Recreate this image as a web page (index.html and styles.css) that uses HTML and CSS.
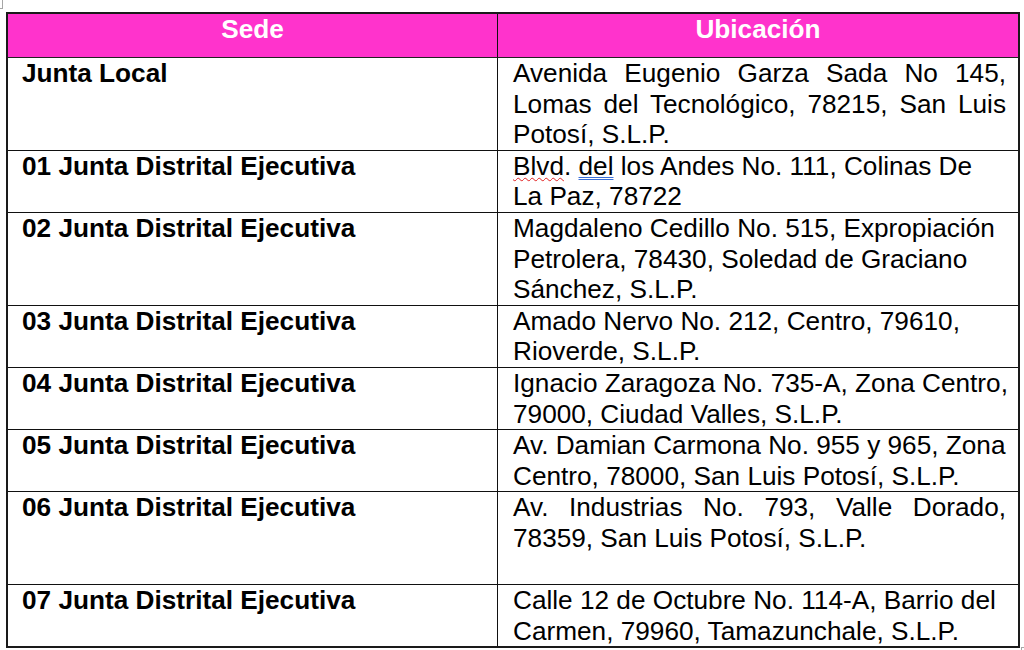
FILE: index.html
```html
<!DOCTYPE html>
<html lang="es">
<head>
<meta charset="utf-8">
<title>Sedes</title>
<link rel="stylesheet" href="styles.css">
</head>
<body>
<div class="mark mark-tl"></div>
<div class="mark mark-br"></div>
<div class="sedes">
  <div class="cell head">Sede</div>
  <div class="cell head">Ubicación</div>

  <div class="cell name">Junta Local</div>
  <div class="cell addr">
    <span class="ln j">Avenida Eugenio Garza Sada No 145,</span>
    <span class="ln j">Lomas del Tecnológico, 78215, San Luis</span>
    <span class="ln">Potosí, S.L.P.</span>
  </div>

  <div class="cell name">01 Junta Distrital Ejecutiva</div>
  <div class="cell addr">
    <span class="ln"><span class="spell">Blvd</span>. <span class="gram">del</span> los Andes No. 111, Colinas De</span>
    <span class="ln">La Paz, 78722</span>
  </div>

  <div class="cell name">02 Junta Distrital Ejecutiva</div>
  <div class="cell addr">
    <span class="ln">Magdaleno Cedillo No. 515, Expropiación</span>
    <span class="ln">Petrolera, 78430, Soledad de Graciano</span>
    <span class="ln">Sánchez, S.L.P.</span>
  </div>

  <div class="cell name">03 Junta Distrital Ejecutiva</div>
  <div class="cell addr">
    <span class="ln">Amado Nervo No. 212, Centro, 79610,</span>
    <span class="ln">Rioverde, S.L.P.</span>
  </div>

  <div class="cell name">04 Junta Distrital Ejecutiva</div>
  <div class="cell addr">
    <span class="ln">Ignacio Zaragoza No. 735-A, Zona Centro,</span>
    <span class="ln">79000, Ciudad Valles, S.L.P.</span>
  </div>

  <div class="cell name">05 Junta Distrital Ejecutiva</div>
  <div class="cell addr">
    <span class="ln">Av. Damian Carmona No. 955 y 965, Zona</span>
    <span class="ln">Centro, 78000, San Luis Potosí, S.L.P.</span>
  </div>

  <div class="cell name">06 Junta Distrital Ejecutiva</div>
  <div class="cell addr">
    <span class="ln j">Av. Industrias No. 793, Valle Dorado,</span>
    <span class="ln">78359, San Luis Potosí, S.L.P.</span>
    <span class="ln">&nbsp;</span>
  </div>

  <div class="cell name last">07 Junta Distrital Ejecutiva</div>
  <div class="cell addr last">
    <span class="ln">Calle 12 de Octubre No. 114-A, Barrio del</span>
    <span class="ln">Carmen, 79960, Tamazunchale, S.L.P.</span>
  </div>
</div>
</body>
</html>
```

FILE: styles.css
```css
html, body {
  margin: 0;
  padding: 0;
  background: #ffffff;
}

body {
  position: relative;
  width: 1024px;
  height: 650px;
  overflow: hidden;
  font-family: "Liberation Sans", Arial, sans-serif;
  color: #000000;
}

.mark {
  position: absolute;
  border-color: #a6a6a6;
  border-style: solid;
}

.mark-tl {
  left: 0;
  top: 0;
  width: 2px;
  height: 8px;
  border-width: 0 1px 1px 0;
}

.mark-br {
  left: 1021px;
  top: 647px;
  width: 3px;
  height: 3px;
  border-width: 1px 0 0 1px;
}

.sedes {
  box-sizing: border-box;
  margin: 12px 0 0 6px;
  width: 1014px;
  border: 2px solid #1a1a1a;
  display: grid;
  grid-template-columns: 490px 1fr;
  font-size: 26.2px;
  line-height: 30.6px;
}

.cell {
  box-sizing: border-box;
  border-bottom: 1px solid #111111;
  min-width: 0;
}

.cell:nth-child(odd) {
  border-right: 1px solid #111111;
}

.cell.last {
  border-bottom: none;
}

.head {
  background: #ff33cc;
  color: #ffffff;
  font-weight: bold;
  text-align: center;
  height: 44px;
  border-bottom-color: #222222;
}

.name {
  font-weight: bold;
  padding-left: 14px;
  white-space: nowrap;
}

.addr {
  padding-left: 15px;
  padding-right: 12px;
}

.ln {
  display: block;
  white-space: nowrap;
}

.ln.j {
  text-align: justify;
  text-align-last: justify;
  white-space: normal;
}

.spell {
  text-decoration: underline wavy #e02020;
  text-decoration-thickness: 1px;
  text-underline-offset: 2px;
}

.gram {
  text-decoration: underline double #3a6fd8;
  text-decoration-thickness: 1px;
  text-underline-offset: 2px;
}
```
